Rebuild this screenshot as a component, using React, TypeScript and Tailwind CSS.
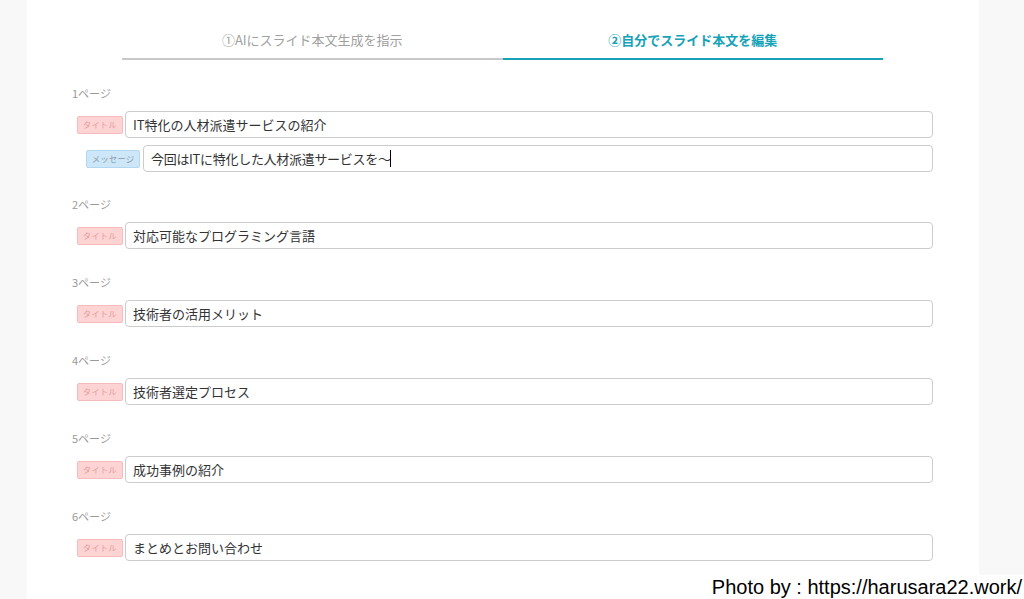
import React from "react";

const font = { fontFamily: '"Noto Sans CJK JP", "Noto Sans", sans-serif' };

function Badge({ kind }: { kind: "title" | "message" }) {
  if (kind === "title") {
    return (
      <div className="ml-[5px] w-[46px] h-[18px] shrink-0 flex items-center justify-center rounded-[2px] bg-[#fdd3d3] border border-[#f6bcbc] text-[8px] tracking-[0.5px] text-[#e39a9a] leading-none">
        タイトル
      </div>
    );
  }
  return (
    <div className="ml-[14px] w-[54px] h-[18px] shrink-0 flex items-center justify-center rounded-[2px] bg-[#cde7f8] border border-[#b2d7f0] text-[8.5px] text-[#8c9cad] leading-none">
      メッセージ
    </div>
  );
}

function Field({ text, caret }: { text: string; caret?: boolean }) {
  return (
    <div className="flex-1 h-[27px] border border-[#cccccc] rounded-[4px] bg-white flex items-center pl-[7px] text-[13px] text-[#333333]">
      <span className={caret ? "tracking-[-0.3px]" : ""}>{text}</span>
      {caret && <span className="w-[1px] h-[17px] bg-black ml-[-1px]" />}
    </div>
  );
}

function Row({ kind, text, caret, className }: { kind: "title" | "message"; text: string; caret?: boolean; className?: string }) {
  return (
    <div className={"flex items-center " + (className ?? "")}>
      <Badge kind={kind} />
      <div className={kind === "title" ? "w-[2px]" : "w-[3px]"} />
      <Field text={text} caret={caret} />
    </div>
  );
}

const pages = [
  { n: 2, title: "対応可能なプログラミング言語" },
  { n: 3, title: "技術者の活用メリット" },
  { n: 4, title: "技術者選定プロセス" },
  { n: 5, title: "成功事例の紹介" },
  { n: 6, title: "まとめとお問い合わせ" },
];

export default function App() {
  return (
    <div className="relative w-[1024px] h-[599px] flex bg-white overflow-hidden" style={font}>
      <div className="w-[27px] shrink-0 bg-[#f8f8f8]" />
      <div className="flex-1 bg-white pl-[45px] pr-[46px]">
        <div className="ml-[50px] w-[761px] flex">
          <div className="flex-1 pt-[30px] pb-[8px] border-b-2 border-[#c8c8c8] text-center text-[13px] leading-[20px] text-[#a0a0a0] font-normal">
            ①AIにスライド本文生成を指示
          </div>
          <div className="flex-1 pt-[30px] pb-[8px] border-b-2 border-[#17a2b8] text-center text-[13px] leading-[20px] text-[#17a2b8] font-bold">
            ②自分でスライド本文を編集
          </div>
        </div>

        <div className="mt-[25px]">
          <div className="text-[11px] leading-[16px] text-[#999999]">1ページ</div>
          <Row kind="title" text="IT特化の人材派遣サービスの紹介" className="mt-[10px]" />
          <Row kind="message" text="今回はITに特化した人材派遣サービスを〜" caret className="mt-[7px]" />
        </div>

        {pages.map((p, i) => (
          <div key={p.n} className={i === 0 ? "mt-[24px]" : "mt-[25px]"}>
            <div className="text-[11px] leading-[16px] text-[#999999]">{p.n}ページ</div>
            <Row kind="title" text={p.title} className="mt-[10px]" />
          </div>
        ))}
      </div>
      <div className="w-[45px] shrink-0 bg-[#f8f8f8]" />

      <div
        className="absolute right-0 bottom-0 h-[24px] bg-white pl-[4px] pr-[2px] text-[20px] leading-[24px] text-black"
        style={{ fontFamily: '"Liberation Sans", Arial, sans-serif' }}
      >
        Photo by : https://harusara22.work/
      </div>
    </div>
  );
}
